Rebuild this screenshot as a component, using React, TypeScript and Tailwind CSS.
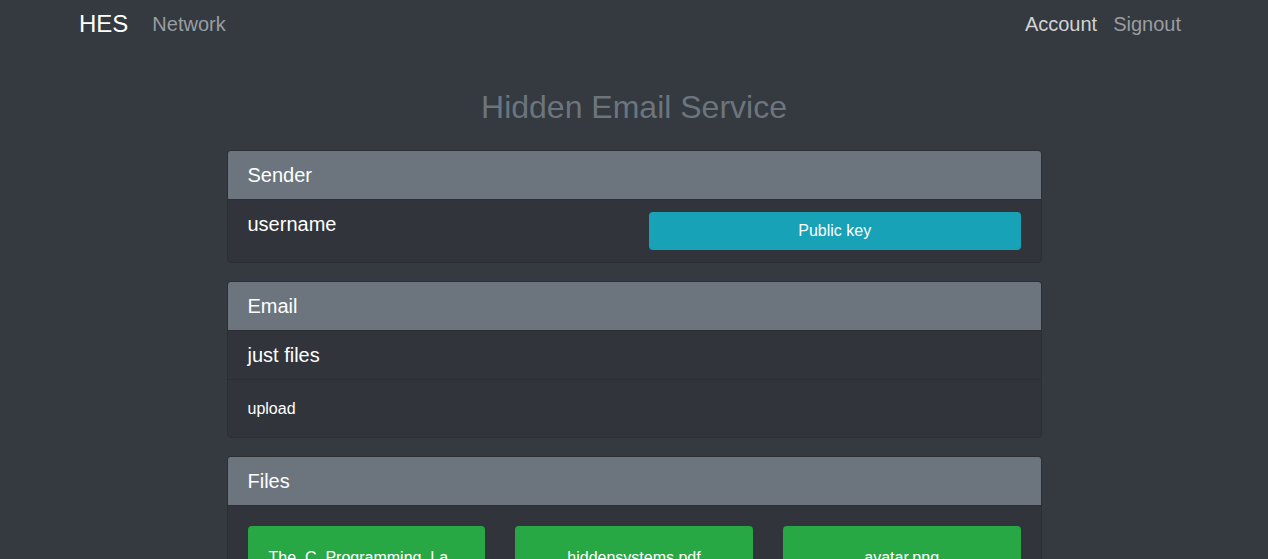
const files = [
  { name: 'The_C_Programming_Language.pdf', className: 'pl-[21px] pr-[37px]' },
  { name: 'hiddensystems.pdf', className: 'px-5' },
  { name: 'avatar.png', className: 'px-5' },
];

function CardHeader({ title }: { title: string }) {
  return (
    <div className="bg-[#6c757d] px-5 py-3 text-[20px] leading-6 text-white border-b border-[#2b2f34]">
      {title}
    </div>
  );
}

export default function App() {
  return (
    <div className="min-h-[559px] bg-[#343a40] font-['Liberation_Sans',Arial,sans-serif] text-white overflow-hidden">
      <nav className="h-12 flex items-center justify-between pl-[79px] pr-[79px]">
        <div className="flex items-center">
          <span className="text-[24px] leading-none text-white mr-4">HES</span>
          <span className="px-2 text-[20px] text-[#9a9da1]">Network</span>
        </div>
        <div className="flex items-center text-[20px]">
          <span className="px-2 text-[#d1d3d5]">Account</span>
          <span className="px-2 text-[#9a9da1]">Signout</span>
        </div>
      </nav>

      <h1 className="mt-10 mb-6 text-center text-[32px] leading-[38px] text-[#6c757d]">
        Hidden Email Service
      </h1>

      <div className="w-[815px] mx-auto flex flex-col gap-[18px]">
        <div className="rounded border border-[#2b2f34] overflow-hidden bg-[#31353b]">
          <CardHeader title="Sender" />
          <div className="grid grid-cols-2 px-5 py-3">
            <div className="text-[20px] leading-6">username</div>
            <button className="ml-[15px] h-[38px] rounded bg-[#17a2b8] text-base text-white">
              Public key
            </button>
          </div>
        </div>

        <div className="rounded border border-[#2b2f34] overflow-hidden bg-[#31353b]">
          <CardHeader title="Email" />
          <div className="px-5 py-3 text-[20px] leading-6 border-b border-[#2b2f34]">just files</div>
          <div className="px-5 pt-[17px] pb-4 text-base leading-6">upload</div>
        </div>

        <div className="rounded border border-[#2b2f34] overflow-hidden bg-[#31353b]">
          <CardHeader title="Files" />
          <div className="grid grid-cols-3 items-start gap-[30px] px-5 py-5">
            {files.map((f) => (
              <div
                key={f.name}
                className={`rounded bg-[#28a745] py-5 text-base leading-6 text-white text-center break-all cursor-pointer ${f.className}`}
              >
                {f.name}
              </div>
            ))}
          </div>
        </div>
      </div>
    </div>
  );
}
